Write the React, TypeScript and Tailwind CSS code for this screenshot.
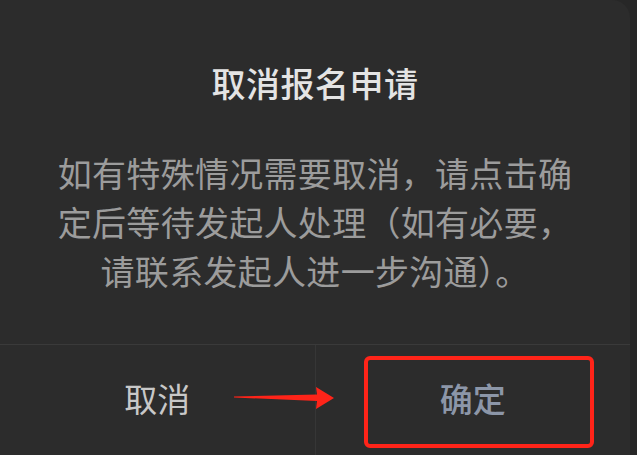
import React from 'react'

const cjk = { fontFamily: '"Noto Sans CJK SC", "Noto Sans", sans-serif' }

function Arrow() {
  return (
    <svg width="102" height="24" viewBox="0 0 102 24" className="absolute left-[234px] top-[386px]">
      <polygon points="0,10.5 83,8.5 82,1 100,12 82,23 83,15 0,11.5" fill="#ff2419" />
    </svg>
  )
}

export default function App() {
  return (
    <div className="relative w-[637px] h-[455px] overflow-hidden bg-[#272727]" style={cjk}>
      <div className="w-[630px] h-full bg-[#2c2c2c] rounded-tr-[18px] flex flex-col">
        <div className="h-[344px] flex flex-col items-center">
          <div className="mt-[63px] text-[34px] leading-[40px] font-medium text-[#e4e4e4] tracking-[0.5px]">
            取消报名申请
          </div>
          <div className="mt-[45px] text-[34px] leading-[49px] text-[#9c9c9c] text-center whitespace-nowrap tracking-[0.3px]">
            如有特殊情况需要取消，请点击确
            <br />
            定后等待发起人处理（如有必要，
            <br />
            请联系发起人进一步沟通）。
          </div>
        </div>
        <div className="flex-1 flex border-t border-[#3a3a3a]">
          <div className="flex-1 flex items-center justify-center text-[33px] text-[#c8c8c8] pb-[2px]">
            取消
          </div>
          <div className="w-px bg-[#363636]" />
          <div className="flex-1 flex items-center justify-center text-[33px] text-[#8c96a8] font-medium pb-[2px]">
            确定
          </div>
        </div>
      </div>
      <div className="absolute left-[364px] top-[356px] w-[230px] h-[92px] border-[4px] border-[#ff2419] rounded-[6px]" />
      <Arrow />
    </div>
  )
}
